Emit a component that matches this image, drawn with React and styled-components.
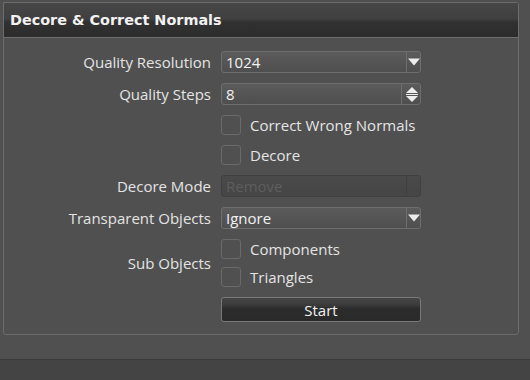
import React from "react";
import styled, { createGlobalStyle } from "styled-components";

const GlobalStyle = createGlobalStyle`
    body {
        margin: 0;
        background: #505050;
        font-family: "Open Sans", "Noto Sans", sans-serif;
    }
`;

function DownArrow() {
    return (
        <svg width="12" height="8" viewBox="0 0 12 8">
            <polygon points="0,0.5 12,0.5 6,7.5" fill="#ececec" />
        </svg>
    );
}

function SpinArrows() {
    return (
        <svg width="12" height="15" viewBox="0 0 12 15">
            <polygon points="6,0 12,6 0,6" fill="#ececec" />
            <rect x="0" y="7" width="12" height="1" fill="#ececec" />
            <polygon points="0,9 12,9 6,15" fill="#ececec" />
        </svg>
    );
}

function Select({ value, spin, disabled }) {
    return (
        <SelectBox disabled={disabled}>
            <SelectValue disabled={disabled}>{value}</SelectValue>
            <ArrowCell $wide={spin} disabled={disabled}>
                {!disabled && (spin ? <SpinArrows /> : <DownArrow />)}
            </ArrowCell>
        </SelectBox>
    );
}

function Check({ label }) {
    return (
        <CheckRow>
            <Box />
            <CheckText>{label}</CheckText>
        </CheckRow>
    );
}

export default function App() {
    return (
        <>
            <GlobalStyle />
            <Page>
                <Panel>
                    <Header>
                        <Title>Decore &amp; Correct Normals</Title>
                    </Header>
                    <Form>
                        <Label>Quality Resolution</Label>
                        <Select value="1024" />
                        <Label>Quality Steps</Label>
                        <Select value="8" spin />
                        <span />
                        <Check label="Correct Wrong Normals" />
                        <span />
                        <Check label="Decore" />
                        <Label>Decore Mode</Label>
                        <Select value="Remove" disabled />
                        <Label>Transparent Objects</Label>
                        <Select value="Ignore" />
                        <Label>Sub Objects</Label>
                        <CheckGroup>
                            <Check label="Components" />
                            <Check label="Triangles" />
                        </CheckGroup>
                        <span />
                        <Button>Start</Button>
                    </Form>
                </Panel>
                <StatusBar />
            </Page>
        </>
    );
}

const Page = styled.div`
    height: 380px;
    display: flex;
    flex-direction: column;
    justify-content: space-between;
    padding-top: 2px;
    box-sizing: border-box;
`;
const Panel = styled.div`
    margin: 0 11px 0 3px;
    height: 333px;
    box-sizing: border-box;
    border: 1px solid #6c6c6c;
    border-radius: 0 3px 3px 3px;
    background: #505050;
`;
const Header = styled.div`
    height: 35px;
    box-sizing: border-box;
    border-bottom: 1px solid #6e6e6e;
    background: linear-gradient(
        #474747 0%,
        #404040 46%,
        #313131 56%,
        #2c2c2c 100%
    );
    display: flex;
    align-items: center;
    padding-left: 6px;
`;
const Title = styled.h1`
    margin: 0;
    font-family: "DejaVu Sans", Verdana, sans-serif;
    font-size: 14.4px;
    font-weight: 700;
    color: #f2f2f2;
`;
const Form = styled.div`
    display: grid;
    grid-template-columns: 207px 200px;
    column-gap: 10px;
    row-gap: 10px;
    padding-top: 13px;
    align-items: center;
`;
const Label = styled.div`
    text-align: right;
    font-size: 15px;
    color: #e4e4e4;
`;
const SelectBox = styled.div`
    height: 22px;
    box-sizing: border-box;
    display: flex;
    border: 1px solid ${(p) => (p.disabled ? "#404040" : "#6e6e6e")};
    border-radius: 3px;
    background: ${(p) =>
        p.disabled
            ? "linear-gradient(#4a4a4a, #454545)"
            : "linear-gradient(#5b5b5b, #4f4f4f)"};
`;
const SelectValue = styled.div`
    flex: 1;
    padding-left: 4px;
    font-size: 15px;
    line-height: 20px;
    color: ${(p) => (p.disabled ? "#5e5e5e" : "#f2f2f2")};
`;
const ArrowCell = styled.div`
    width: ${(p) => (p.$wide ? "19px" : "14px")};
    border-left: 1px solid ${(p) => (p.disabled ? "#404040" : "#6e6e6e")};
    display: flex;
    align-items: center;
    justify-content: center;
    padding-left: ${(p) => (p.$wide ? "2px" : "0")};
    box-sizing: border-box;
`;
const CheckRow = styled.div`
    display: flex;
    align-items: center;
    gap: 9px;
    height: 20px;
`;
const Box = styled.div`
    width: 20px;
    height: 20px;
    box-sizing: border-box;
    border: 1px solid #6a6a6a;
    border-radius: 3px;
`;
const CheckText = styled.span`
    font-size: 15px;
    color: #e4e4e4;
`;
const CheckGroup = styled.div`
    display: flex;
    flex-direction: column;
    gap: 8px;
`;
const Button = styled.div`
    height: 25px;
    box-sizing: border-box;
    border: 1px solid #787878;
    border-radius: 3px;
    background: linear-gradient(#454545 0%, #3b3b3b 30%, #2c2c2c 45%, #2a2a2a 100%);
    display: flex;
    align-items: center;
    justify-content: center;
    font-size: 15px;
    color: #f2f2f2;
`;
const StatusBar = styled.div`
    height: 20px;
    background: #444444;
    border-top: 1px solid #3a3a3a;
`;
